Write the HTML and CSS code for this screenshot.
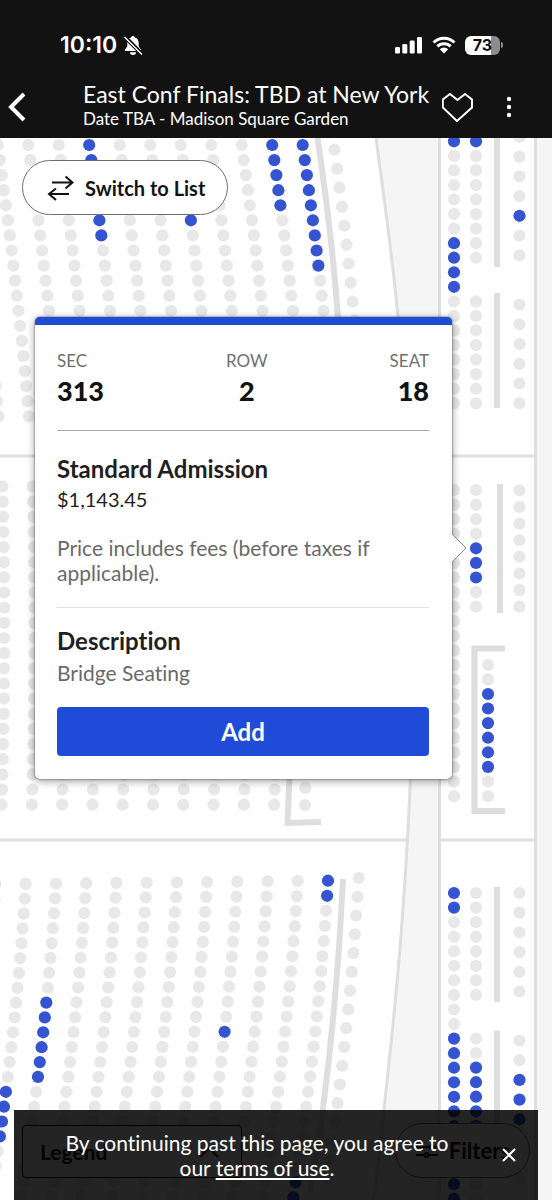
FILE: index.html
```html
<!DOCTYPE html>
<html lang="en">
<head>
<meta charset="utf-8">
<meta name="viewport" content="width=device-width, initial-scale=1">
<title>East Conf Finals: TBD at New York</title>
<link rel="stylesheet" href="styles.css">
</head>
<body>
<div class="screen">
  <header class="top">
    <div class="status">
      <div class="status-left">
        <span class="clock">10:10</span>
        <svg class="bell" width="20" height="21" viewBox="0 0 20 21" aria-hidden="true">
          <path d="M10 1c-1 0-1.700.6-1.900 1.500C5.500 3.300 4.300 5.400 4.300 8v3.500L2 14.500c-.5.8-.1 1.500.8 1.500h14.400c.9 0 1.300-.7.8-1.500l-2.300-3V8c0-2.600-1.200-4.700-3.800-5.500C11.700 1.600 11 1 10 1zM7 17.300a3 2.600 0 0 0 6 0z" fill="#fff"/>
          <path d="M2 2 19 19" stroke="#121212" stroke-width="4"/>
          <path d="M1.500 2 19 19.500" stroke="#fff" stroke-width="1.500"/>
        </svg>
      </div>
      <div class="status-right">
        <svg width="28" height="18" viewBox="0 0 28 18" fill="#fff" aria-hidden="true">
          <rect x="0" y="11" width="5" height="6.500" rx="1.300"/><rect x="7.300" y="8" width="5" height="9.500" rx="1.300"/><rect x="14.700" y="4.500" width="5" height="13" rx="1.300"/><rect x="22" y="1" width="5" height="16.500" rx="1.300"/>
        </svg>
        <svg width="24" height="18" viewBox="0 0 24 18" aria-hidden="true">
          <path d="M1.500 6.500a15 15 0 0 1 21 0M5.300 10.400a9.600 9.600 0 0 1 13.400 0" fill="none" stroke="#fff" stroke-width="2.900"/>
          <path d="M12 17.500 7.800 13.300a6 6 0 0 1 8.400 0z" fill="#fff"/>
        </svg>
        <div class="battery"><span class="battery-body">73</span><span class="battery-cap"></span></div>
      </div>
    </div>
    <nav class="bar">
      <button class="icon-btn back" aria-label="Back">
        <svg width="18" height="30" viewBox="0 0 18 30"><path d="M16 2 3 15 16 28" fill="none" stroke="#fff" stroke-width="4"/></svg>
      </button>
      <div class="heading">
        <h1 class="title">East Conf Finals: TBD at New York</h1>
        <p class="subtitle">Date TBA - Madison Square Garden</p>
      </div>
      <button class="icon-btn fav" aria-label="Favorite">
        <svg width="32" height="30" viewBox="0 0 32 30"><path d="M15 29 .800 15.500V7.500L8 2l7.500 6L23 2l7 5.500v8z" fill="none" stroke="#fff" stroke-width="2"/></svg>
      </button>
      <button class="icon-btn more" aria-label="More">
        <svg width="6" height="22" viewBox="0 0 6 22" fill="#fff"><circle cx="3" cy="3" r="2.200"/><circle cx="3" cy="11" r="2.200"/><circle cx="3" cy="19" r="2.200"/></svg>
      </button>
    </nav>
  </header>

  <main class="venue">
    <svg class="map" viewBox="0 138 552 1062" preserveAspectRatio="xMinYMin slice" role="img" aria-label="Seat map">
      <path class="block" d="M-5 130H375L376 138Q393 262 398 317C406 400 413 520 413 650Q413 740 410 790C404 920 395 1010 385 1100Q380 1150 373 1205H-5z"/>
      <path class="block" d="M439.500 130H535.500V1205H439.500z"/>
      <path class="edge" d="M0 456H404M440 456H535M0 840H408M440 840H535"/>
      <path class="aisle" d="M317.500 138Q332 235 338 318M289.500 775 287.500 823 321 822M343 879Q338 990 324 1100 318 1150 310 1192M497 138V267M497 293V408M500 484V613M505 648.500H474.500V811H505M497 887V1002M497 1030.500V1150"/>
      <g id="seats"></g>
    </svg>

    <button class="pill switch">
      <svg width="28" height="26" viewBox="0 0 28 26"><path d="M5 7.500H25M18.500 1.500 25.500 7.500 18.500 13.500M22 19H2M9 13.500 2 19 9 25" fill="none" stroke="#121212" stroke-width="2"/></svg>
      Switch to List
    </button>

    <section class="card" aria-label="Seat details">
      <svg class="pointer" width="15" height="30" viewBox="0 0 15 30"><path d="M0 1 14 15 0 29z" fill="#fff"/><path d="M0 1 14 15 0 29" fill="none" stroke="#888"/></svg>
      <dl class="place">
        <div><dt>SEC</dt><dd>313</dd></div>
        <div class="mid"><dt>ROW</dt><dd>2</dd></div>
        <div class="end"><dt>SEAT</dt><dd>18</dd></div>
      </dl>
      <div class="offer">
        <h2 class="name">Standard Admission</h2>
        <p class="price">$1,143.45</p>
        <p class="note">Price includes fees (before taxes if applicable).</p>
      </div>
      <div class="about">
        <h2 class="name">Description</h2>
        <p class="detail">Bridge Seating</p>
      </div>
      <button class="add">Add</button>
    </section>

    <button class="legend">Legend
      <svg width="20" height="12" viewBox="0 0 20 12"><path d="M1 11 10 2l9 9" fill="none" stroke="#121212" stroke-width="2"/></svg>
    </button>
    <button class="pill filters">
      <svg width="22" height="18" viewBox="0 0 22 18" fill="none" stroke="#121212" stroke-width="2"><path d="M0 5H13M18 5H22M0 13H8M13 13H22"/><circle cx="15.500" cy="5" r="2"/><circle cx="10.500" cy="13" r="2"/></svg>
      Filters
    </button>

    <aside class="terms">
      <p class="terms-text">By continuing past this page, you agree to our <a href="#terms">terms of use</a>.</p>
      <button class="icon-btn close" aria-label="Close">
        <svg width="14" height="14" viewBox="0 0 14 14"><path d="M1 1 13 13M13 1 1 13" stroke="#fff" stroke-width="2"/></svg>
      </button>
    </aside>
  </main>
</div>
<script src="seats.js"></script>
</body>
</html>
```
FILE: styles.css
```css
* { box-sizing: border-box; }
body {
  margin: 0;
  background: #f5f5f5;
  color: #121212;
  font-family: Lato, "Open Sans", sans-serif;
  font-variant-ligatures: none;
}
h1, h2, p, dl, dd { margin: 0; }
button { font: inherit; font-variant-ligatures: none; color: inherit; cursor: pointer; }
svg { display: block; flex: none; }

.screen { min-height: 100vh; display: flex; flex-direction: column; }

.top { background: #121212; color: #fff; }
.status {
  display: flex;
  align-items: center;
  justify-content: space-between;
  padding: 32px 49px 0 60px;
}
.status-left { display: flex; align-items: center; gap: 6px; height: 26px; }
.clock { font: 600 23px/26px Inter, sans-serif; }
.status-right { display: flex; align-items: center; gap: 9px; }
.battery { display: flex; align-items: center; gap: 1px; }
.battery-body {
  width: 35px;
  border-radius: 6px;
  background: linear-gradient(90deg, #fff 73%, #8c8c8c 73%);
  color: #121212;
  font: 700 16px/19px Inter, sans-serif;
  text-align: center;
}
.battery-cap { width: 2px; height: 6px; border-radius: 0 2px 2px 0; background: #8c8c8c; }

.bar { display: flex; align-items: center; padding: 22px 40px 4px 8px; }
.icon-btn { border: 0; padding: 0; background: none; }
.heading { flex: 1; padding: 0 0 4px 57px; }
.title { font-size: 23px; line-height: 28px; font-weight: 400; white-space: nowrap; }
.subtitle { font-size: 17px; line-height: 22px; white-space: nowrap; }
.more { margin-left: 32px; }

.venue { position: relative; flex: 1; min-height: 1062px; overflow: hidden; background: #f5f5f5; }
.map { position: absolute; inset: 0; width: 100%; height: 100%; }
.block { fill: #fff; stroke: #dedede; stroke-width: 3; }
.edge { fill: none; stroke: #dedede; stroke-width: 3; }
.aisle { fill: none; stroke: #dedede; stroke-width: 6; }
.seat { fill: #e8e8e8; }
.seat.open { fill: #3454d1; }

.pill {
  position: absolute;
  display: flex;
  align-items: center;
  height: 55px;
  border: 1px solid #6f6f6f;
  border-radius: 28px;
  background: #fff;
  font-weight: 700;
}
.switch { top: 22px; left: 22px; gap: 10px; padding: 0 22px 0 24px; font-size: 20px; }

.card {
  position: absolute;
  top: 179px;
  left: 35px;
  right: 100px;
  padding: 25px 23px 23px 22px;
  border-top: 8px solid #1f4bd8;
  border-radius: 5px;
  background: #fff;
  box-shadow: 0 0 2px rgba(0, 0, 0, .7), 0 2px 8px rgba(0, 0, 0, .4);
}
.pointer { position: absolute; left: 100%; top: 208px; }
.place {
  display: flex;
  justify-content: space-between;
  padding-bottom: 22px;
  border-bottom: 1px solid #a6a6a6;
}
.mid { text-align: center; }
.end { text-align: right; }
.place dt { color: #6f6f6f; font-size: 17px; line-height: 22px; }
.place dd { font-size: 27px; line-height: 35px; font-weight: 900; margin-top: 1px; }
.offer { padding: 22px 0; border-bottom: 1px solid #e0e0e0; }
.name { font-size: 24px; line-height: 32px; font-weight: 700; color: #1f1f1f; }
.price { font-size: 20px; line-height: 29px; color: #1f1f1f; }
.note, .detail { color: #6a6a6a; font-size: 21px; line-height: 25px; }
.note { margin-top: 21px; }
.about { padding: 17px 0 18px; }
.about .detail { line-height: 32px; }
.add {
  display: block;
  width: 100%;
  height: 49px;
  border: 0;
  border-radius: 4px;
  background: #1f4bd8;
  color: #fff;
  font-size: 24px;
  font-weight: 700;
}

.legend {
  position: absolute;
  left: 22px;
  bottom: 22px;
  width: 220px;
  height: 53px;
  display: flex;
  align-items: center;
  justify-content: space-between;
  padding: 0 22px 0 17px;
  border: 1px solid #121212;
  border-radius: 4px;
  background: #fff;
  font-size: 21px;
  font-weight: 700;
}
.filters { right: 22px; bottom: 22px; gap: 11px; padding: 0 19px 0 20px; font-size: 22px; }

.terms {
  position: absolute;
  left: 14px;
  right: 14px;
  bottom: 0;
  display: flex;
  align-items: center;
  padding: 20px 22px 20px 44px;
  background: rgba(0, 0, 0, .86);
  color: #fff;
}
.terms-text { flex: 1; text-align: center; font-size: 21px; line-height: 25px; padding-right: 46px; }
.terms a { color: inherit; }
```
FILE: seats.js
```js
const layer = document.getElementById('seats');

function seat(x, y, open) {
  const c = document.createElementNS('http://www.w3.org/2000/svg', 'circle');
  c.setAttribute('cx', x.toFixed(1));
  c.setAttribute('cy', y.toFixed(1));
  c.setAttribute('r', '6.1');
  c.setAttribute('class', open ? 'seat open' : 'seat');
  layer.appendChild(c);
}

// Inclusive ranges of seat numbers: within([[0, 4]], n)
const within = (ranges, n) => (ranges || []).some(([a, b]) => n >= a && n <= b);

// Straight vertical row
function row(x, y, step, count, open) {
  for (let n = 0; n < count; n++) seat(x, y + n * step, within(open, n));
}

// Upper section
const upper = { 3: [[0, 6]], 6: [[5, 5]], 9: [[0, 4]], 10: [[0, 8]] };
for (let c = -1; c <= 10; c++) {
  for (let n = 0; n < 19; n++) {
    seat(-2.3 + c * 30.5 + 2.15 * n - 0.0235 * n * n, 145 + n * 15.07, within(upper[c], n));
  }
}
for (let n = 0; n < 10; n++) seat(334.5 + 2.6 * n - 0.04 * n * n, 149.7 + n * 19, false);

// Middle section
for (let c = 0; c <= 9; c++) {
  for (let n = 0; n < 22; n++) {
    const d = n - 9.5;
    seat(4.3 + c * 30.3 - 0.021 * d * d, 486.5 + n * 15.15, false);
  }
}
seat(305.3, 788, false);
seat(305, 805, false);

// Lower section
const lower = { 1: [[14, 17]], 2: [[8, 13]], 8: [[10, 10]], 11: [[0, 1], [20, 21]] };
for (let c = 0; c <= 11; c++) {
  const top = 884.2 - c * 0.32;
  for (let n = 0; n < 22; n++) {
    seat(-4.5 + c * 30.23 - 0.93 * n - 0.0345 * n * n, top + n * (1091.8 - top) / 14, within(lower[c], n));
  }
}
for (let n = 0; n < 17; n++) seat(358.7 - 1.13 * n - 0.053 * n * n, 878 + n * 18.77, false);

// Bridge, left row
row(454, 141.3, 14.55, 19, [[0, 0], [7, 10]]);
row(454, 490, 14.58, 22);
row(454, 893, 14.56, 22, [[0, 1], [10, 21]]);

// Bridge, middle row
row(476, 141.3, 14.55, 9, [[0, 0]]);
row(476, 301.4, 14.55, 8);
row(476, 490, 14.58, 9, [[4, 6]]);
row(488, 664.8, 14.58, 10, [[2, 7]]);
row(476, 893, 14.56, 8);
row(476, 1038.5, 14.56, 12, [[2, 8]]);

// Bridge, right row
row(519.5, 136.8, 19.75, 7, [[4, 4]]);
row(519.5, 304.5, 19.75, 6);
row(519.5, 490.3, 16.63, 8);
row(519.5, 893, 19.7, 6);
row(519.5, 1040.5, 19.7, 8, [[2, 4]]);
```
